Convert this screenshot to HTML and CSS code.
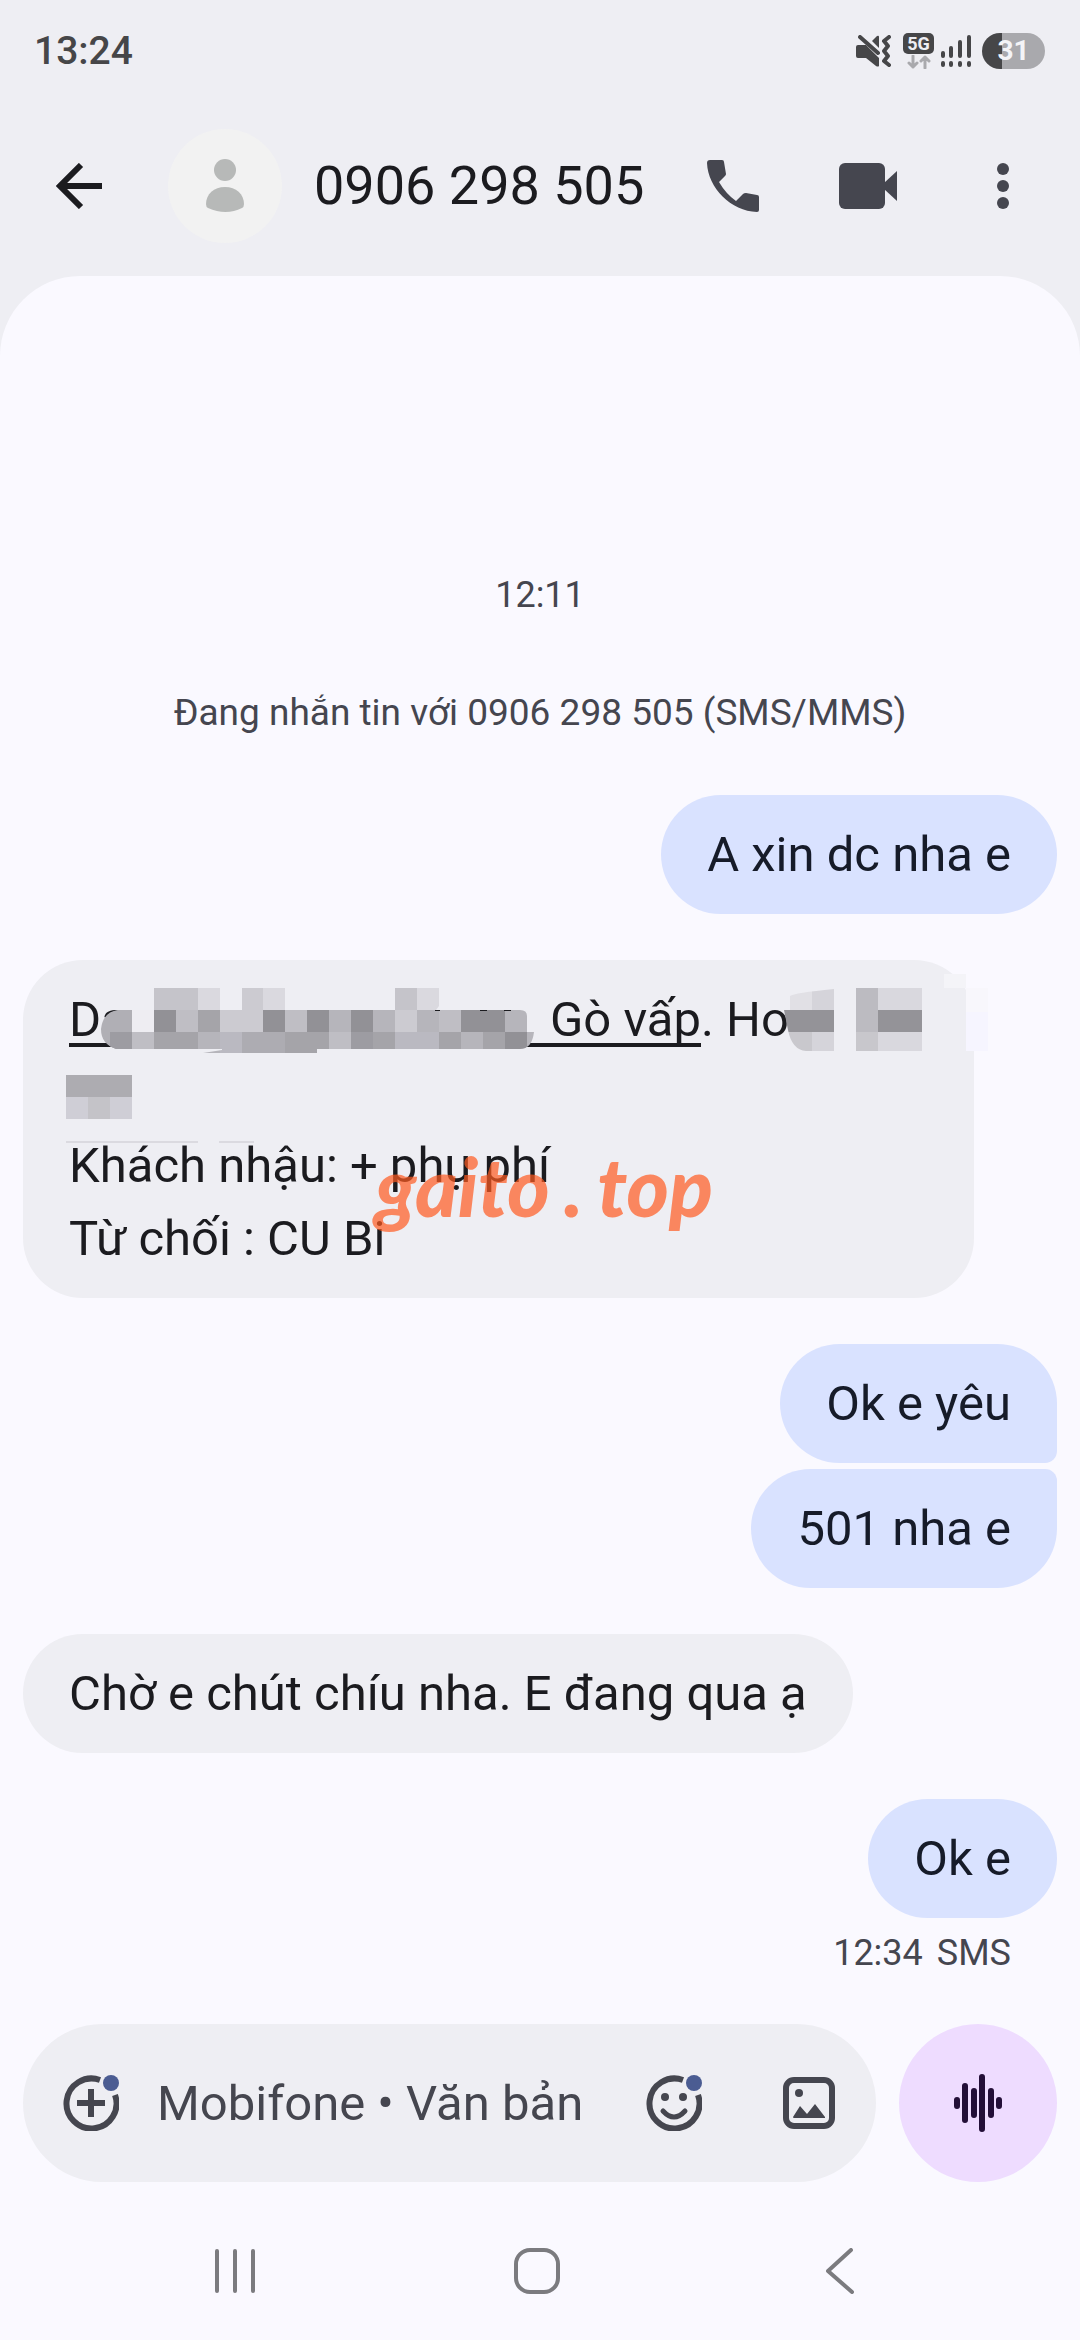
FILE: index.html
```html
<!DOCTYPE html>
<html lang="vi">
<head>
<meta charset="utf-8">
<meta name="viewport" content="width=device-width">
<title>0906 298 505</title>
<link rel="stylesheet" href="styles.css">
</head>
<body>
<div class="screen">
  <div class="status">
    <time class="clock">13:24</time>
    <div class="status-icons">
      <svg class="mute" width="36" height="32" viewBox="0 0 36 32" fill="#464648">
        <path d="M2 10H10L23 23V31Q22 32 20 31L10 23H2Q0 23 0 21V12Q0 10 2 10Z"/>
        <path d="M16 6L21 1Q23 0 23 2V13Z"/>
        <path d="M4 2L22 18M33 2L28 6L32 11L28 16L32 21L28 26L33 30" fill="none" stroke="#464648" stroke-width="4" stroke-linecap="round" stroke-linejoin="round"/>
      </svg>
      <div class="network">
        <span class="network-type">5G</span>
        <svg width="24" height="14" viewBox="0 0 24 14" fill="none" stroke="#a9a9ad" stroke-width="3" stroke-linecap="round" stroke-linejoin="round">
          <path d="M6 1V12M2 8L6 12L10 8M18 13V2M14 6L18 2L22 6"/>
        </svg>
      </div>
      <svg class="signal" width="32" height="34" viewBox="0 0 32 34" stroke="#464648" stroke-width="4" stroke-linecap="round">
        <path d="M3 19V22M11 14V22M20 8V22M29 3V22M3 29V31M11 29V31M20 29V31M29 29V31"/>
      </svg>
      <span class="battery">31</span>
    </div>
  </div>

  <header class="appbar">
    <button class="icon-button" aria-label="Quay lại">
      <svg width="46" height="46" viewBox="0 0 46 46" fill="none" stroke="#1b1b1f" stroke-width="6"><path d="M46 23H5M25 2L4 23L25 44"/></svg>
    </button>
    <div class="avatar">
      <svg width="38" height="54" viewBox="0 0 38 54" fill="#b7b9b8"><circle cx="19" cy="11" r="11"/><path d="M0 45C0 35 8 28 19 28S38 35 38 45Q38 48 36 49Q20 57 2 49Q0 48 0 45Z"/></svg>
    </div>
    <h1 class="title">0906 298 505</h1>
    <div class="actions">
      <button class="icon-button" aria-label="Gọi điện">
        <svg width="52" height="52" viewBox="0 0 52 52" fill="#45464f"><path d="M3 0H15Q17 0 17 2L19 14Q19 15 18 16L12 22Q19 34 29 41L36 34Q37 33 39 33L50 35Q52 35 52 37V50Q52 52 50 52C24 51 1 28 0 3Q0 0 3 0Z"/></svg>
      </button>
      <button class="icon-button" aria-label="Gọi video">
        <svg width="58" height="46" viewBox="0 0 58 46" fill="#45464f"><rect width="46" height="46" rx="6"/><path d="M45 20L58 8V38L45 26Z"/></svg>
      </button>
      <button class="icon-button" aria-label="Tùy chọn khác">
        <svg width="12" height="46" viewBox="0 0 12 46" fill="#45464f"><circle cx="6" cy="6" r="6"/><circle cx="6" cy="23" r="6"/><circle cx="6" cy="40" r="6"/></svg>
      </button>
    </div>
  </header>

  <main class="panel">
    <div class="messages">
      <time class="note">12:11</time>
      <p class="note info">Đang nhắn tin với 0906 298 505 (SMS/MMS)</p>

      <p class="bubble sent">A xin dc nha e</p>

      <div class="bubble received redacted">
        <p class="address"><a href="#map" class="place"><span>Da</span><span>Gò vấp</span></a>. Ho</p>
        <p>&nbsp;</p>
        <p>Khách nhậu: + phụ phí</p>
        <p>Từ chối : CU Bi</p>
        <svg class="mosaic" width="951" height="338" viewBox="23 960 951 338" shape-rendering="crispEdges" aria-hidden="true">
          <clipPath id="pill"><path d="M154 986H439V1006L436 1010H520Q527 1010 527 1016V1032H534Q532 1049 520 1049H317V1053H203L222 1050V1049H116Q101 1044 101 1029Q103 1012 118 1010H154Z"/></clipPath>
          <clipPath id="round"><path d="M784 1010H790V996Q794 993 834 989V1051H806Q792 1050 788 1030Z"/></clipPath>
          <g clip-path="url(#pill)">
            <path fill="#b0afb5" d="M98 1010h34v40h-34z"/>
            <path fill="#c5c4ca" d="M154 988h44v22h-44zM395 988h22v22h-22z"/>
            <path fill="#dad9df" d="M198 988h22v22h-22zM263 988h22v22h-22zM417 988h22v22h-22z"/>
            <path fill="#cccbd1" d="M242 988h21v22h-21zM220 1010h22v22h-22zM242 1010h21v22h-21zM395 1010h22v22h-22z"/>
            <path fill="#eeedf2" d="M132 1010h22v22h-22z"/>
            <path fill="#929196" d="M154 1010h22v22h-22zM263 1010h22v22h-22zM307 1010h22v22h-22zM351 1010h22v22h-22zM461 1010h44v22h-44zM505 1032h22v22h-22z"/>
            <path fill="#bfbec4" d="M176 1010h22v22h-22zM285 1010h22v22h-22zM439 1010h22v22h-22zM132 1032h22v22h-22zM329 1032h22v22h-22z"/>
            <path fill="#a5a4a9" d="M198 1010h22v22h-22zM154 1032h44v22h-44zM285 1032h44v22h-44zM373 1032h22v22h-22zM439 1032h22v22h-22zM483 1032h22v22h-22z"/>
            <path fill="#b6b5bb" d="M329 1010h22v22h-22zM373 1010h22v22h-22zM417 1010h22v22h-22zM505 1010h22v22h-22zM198 1032h22v22h-22zM461 1032h22v22h-22zM527 1032h8v22h-8z"/>
            <path fill="#bab9c1" d="M220 1032h22v22h-22zM395 1032h44v22h-44z"/>
            <path fill="#adacb2" d="M242 1032h43v22h-43z"/>
            <path fill="#9d9ca2" d="M110 1032h22v22h-22zM351 1032h22v22h-22z"/>
          </g>
          <path fill="#1b1b1f" d="M435 1010h5v1h-5zM480 1010h7v1h-7zM504 1010h7v1h-7z"/>
          <g clip-path="url(#round)">
            <path fill="#e1e0e5" d="M790 988h22v22h-22z"/>
            <path fill="#d5d4da" d="M812 988h22v22h-22zM812 1032h22v19h-22z"/>
            <path fill="#949398" d="M784 1010h50v22h-50z"/>
            <path fill="#c9c8cd" d="M784 1032h28v19h-28z"/>
          </g>
          <path fill="#bcbbc1" d="M856 988h22v44h-22z"/>
          <path fill="#c8c7cc" d="M856 1032h22v19h-22z"/>
          <path fill="#d9d8de" d="M878 988h44v22h-44zM878 1032h44v19h-44z"/>
          <path fill="#949398" d="M878 1010h44v22h-44z"/>
          <path fill="#f4f4f8" d="M944 974h22v14h-22z"/>
          <path fill="#f8f7fc" d="M966 988h22v24h-22z"/>
          <path fill="#f6f5ff" d="M966 1012h22v39h-22z"/>
          <path fill="#adacb1" d="M66 1075h66v22h-66z"/>
          <path fill="#cfced6" d="M66 1097h66v22h-66z"/>
          <path fill="#c4c3c8" d="M88 1097h22v22h-22z"/>
          <path fill="#dbdae0" d="M66 1141h132v2h-132zM219 1141h35v2h-35z"/>
        </svg>
        <div class="watermark" aria-hidden="true"><span>gaito</span><span>.</span><span>top</span></div>
      </div>

      <p class="bubble sent group-first">Ok e yêu</p>
      <p class="bubble sent group-last">501 nha e</p>

      <p class="bubble received">Chờ e chút chíu nha. E đang qua ạ</p>

      <p class="bubble sent">Ok e</p>
      <p class="meta"><time>12:34</time><span>SMS</span></p>
    </div>

    <form class="composer">
      <div class="field">
        <button type="button" class="icon-button" aria-label="Thêm">
          <svg width="56" height="56" viewBox="0 0 56 56" fill="none" stroke="#45464f" stroke-width="6"><path d="M52 20A25 25 0 1 1 37 5M14 28H42M28 14V42"/><circle cx="48" cy="8" r="8" fill="#4b5c92" stroke="none"/></svg>
        </button>
        <input class="text" type="text" aria-label="Tin nhắn" placeholder="Mobifone • Văn bản">
        <button type="button" class="icon-button" aria-label="Biểu tượng cảm xúc">
          <svg width="56" height="56" viewBox="0 0 56 56" fill="none" stroke="#45464f" stroke-width="6"><path d="M52 20A25 25 0 1 1 37 5"/><path d="M17 36Q28 48 39 36" stroke-width="5" stroke-linecap="round"/><g stroke="none" fill="#45464f"><circle cx="19" cy="22" r="4"/><circle cx="37" cy="22" r="4"/></g><circle cx="48" cy="8" r="8" fill="#4b5c92" stroke="none"/></svg>
        </button>
        <button type="button" class="icon-button gallery" aria-label="Thư viện ảnh">
          <svg width="52" height="52" viewBox="0 0 52 52" fill="#45464f"><rect x="3" y="3" width="46" height="46" rx="8" fill="none" stroke="#45464f" stroke-width="6"/><circle cx="16" cy="16" r="4"/><path d="M11 41Q10 41 10 40L17 29L24 37L32 27L42 40V41Z"/></svg>
        </button>
      </div>
      <button type="button" class="voice" aria-label="Ghi âm">
        <svg width="50" height="58" viewBox="0 0 50 58" stroke="#230f38" stroke-width="6" stroke-linecap="round"><path d="M4 26V32M12 12V46M21 17V41M29 3V55M38 17V41M46 26V32"/></svg>
      </button>
    </form>
  </main>

  <nav class="navbar">
    <button class="icon-button" aria-label="Gần đây"><svg width="40" height="44" viewBox="0 0 40 44" stroke="#7b7b7f" stroke-width="4" stroke-linecap="round"><path d="M2 2V42M20 2V42M38 2V42"/></svg></button>
    <button class="icon-button" aria-label="Trang chủ"><svg width="46" height="46" viewBox="0 0 46 46"><rect x="2" y="2" width="42" height="42" rx="14" fill="none" stroke="#7b7b7f" stroke-width="4"/></svg></button>
    <button class="icon-button" aria-label="Trở về"><svg width="28" height="46" viewBox="0 0 28 46" fill="none" stroke="#7b7b7f" stroke-width="4" stroke-linecap="round" stroke-linejoin="round"><path d="M25 2L2 23L26 44"/></svg></button>
  </nav>
</div>
</body>
</html>
```
FILE: styles.css
```css
* {
  box-sizing: border-box;
}

body {
  margin: 0;
  background: #eeeef3;
  color: #1b1b1f;
  font-family: Roboto, "Noto Sans", sans-serif;
}

p,
h1 {
  margin: 0;
  font-weight: 400;
}

button {
  padding: 0;
  border: 0;
  background: none;
}

svg {
  display: block;
  flex: none;
}

.icon-button {
  display: flex;
  align-items: center;
  justify-content: center;
}

.screen {
  display: flex;
  flex-direction: column;
  min-height: 100vh;
}

/* Status bar */
.status {
  display: flex;
  align-items: center;
  justify-content: space-between;
  height: 96px;
  padding: 6px 35px 0 34px;
}

.clock {
  color: #464648;
  font-size: 39px;
  font-weight: 500;
}

.status-icons {
  display: flex;
  align-items: center;
}

.network {
  display: flex;
  flex-direction: column;
  align-items: center;
  gap: 1px;
  margin: 0 6px 0 11px;
}

.network-type {
  width: 31px;
  border-radius: 5px;
  background: #464648;
  color: #eeeef3;
  font-size: 18px;
  font-weight: 700;
  line-height: 21px;
  text-align: center;
}

.battery {
  width: 63px;
  margin-left: 10px;
  border-radius: 18px;
  background: linear-gradient(90deg, #464648 20px, #a9a9ad 20px);
  color: #f4f4f7;
  font-size: 28px;
  font-weight: 700;
  line-height: 36px;
  text-align: center;
}

/* App bar */
.appbar {
  display: flex;
  align-items: center;
  height: 180px;
  padding: 0 10px 0 56px;
}

.avatar {
  display: flex;
  align-items: center;
  justify-content: center;
  width: 114px;
  height: 114px;
  margin: 0 32px 0 66px;
  border-radius: 50%;
  background: #f2f2f2;
}

.title {
  flex: 1;
  font-size: 54px;
  line-height: 64px;
  white-space: nowrap;
}

.actions {
  display: flex;
}

.actions .icon-button {
  width: 135px;
  height: 96px;
}

/* Conversation */
.panel {
  display: flex;
  flex: 1;
  flex-direction: column;
  border-radius: 80px 80px 0 0;
  background: #faf9ff;
}

.messages {
  display: flex;
  flex: 1;
  flex-direction: column;
  align-items: flex-start;
  justify-content: flex-end;
  padding: 0 23px 50px;
}

.note {
  align-self: center;
  color: #45464f;
  font-size: 36px;
  line-height: 42px;
}

.info {
  margin: 76px 0 15px;
  font-size: 37px;
}

.bubble {
  margin-top: 46px;
  padding: 23px 46px;
  border-radius: 60px;
  font-size: 49px;
  line-height: 73px;
}

.sent {
  align-self: flex-end;
  background: #d9e2ff;
  color: #161b29;
}

.received {
  background: #eeeef3;
}

.group-first {
  border-bottom-right-radius: 12px;
}

.group-last {
  margin-top: 6px;
  border-top-right-radius: 12px;
}

.redacted {
  position: relative;
  width: 92%;
}

.address {
  display: flex;
  white-space: pre;
}

.place {
  display: flex;
  justify-content: space-between;
  width: 632px;
  background: linear-gradient(#1b1b1f, #1b1b1f) 0 60px / 100% 4px no-repeat;
  color: inherit;
  text-decoration: none;
}

.mosaic {
  position: absolute;
  top: 0;
  left: 0;
  overflow: visible;
}

.watermark {
  position: absolute;
  top: 176px;
  left: 352px;
  display: flex;
  gap: 14px;
  color: rgba(255, 90, 32, 0.7);
  font-family: Lato, "Liberation Sans", sans-serif;
  font-size: 81px;
  font-style: italic;
  font-weight: 900;
  line-height: 100px;
}

.meta {
  display: flex;
  align-self: flex-end;
  gap: 14px;
  margin: 14px 46px 0 0;
  color: #45464f;
  font-size: 36px;
  line-height: 42px;
}

/* Composer */
.composer {
  display: flex;
  gap: 23px;
  padding: 0 23px;
}

.field {
  display: flex;
  flex: 1;
  align-items: center;
  min-width: 0;
  height: 158px;
  padding: 0 41px 0 40px;
  border-radius: 79px;
  background: #eeeef3;
}

.text {
  flex: 1;
  min-width: 0;
  margin-left: 38px;
  padding: 0;
  border: 0;
  outline: 0;
  background: none;
  color: #45464f;
  font: inherit;
  font-size: 49px;
  line-height: 73px;
}

.text::placeholder {
  color: #45464f;
  opacity: 1;
}

.gallery {
  margin-left: 81px;
}

.voice {
  display: flex;
  align-items: center;
  justify-content: center;
  width: 158px;
  height: 158px;
  border-radius: 50%;
  background: #eedcff;
}

/* System navigation */
.navbar {
  display: flex;
  height: 158px;
  padding: 20px 89px 0 84px;
  background: #faf9ff;
}

.navbar .icon-button {
  flex: 1;
}
```
